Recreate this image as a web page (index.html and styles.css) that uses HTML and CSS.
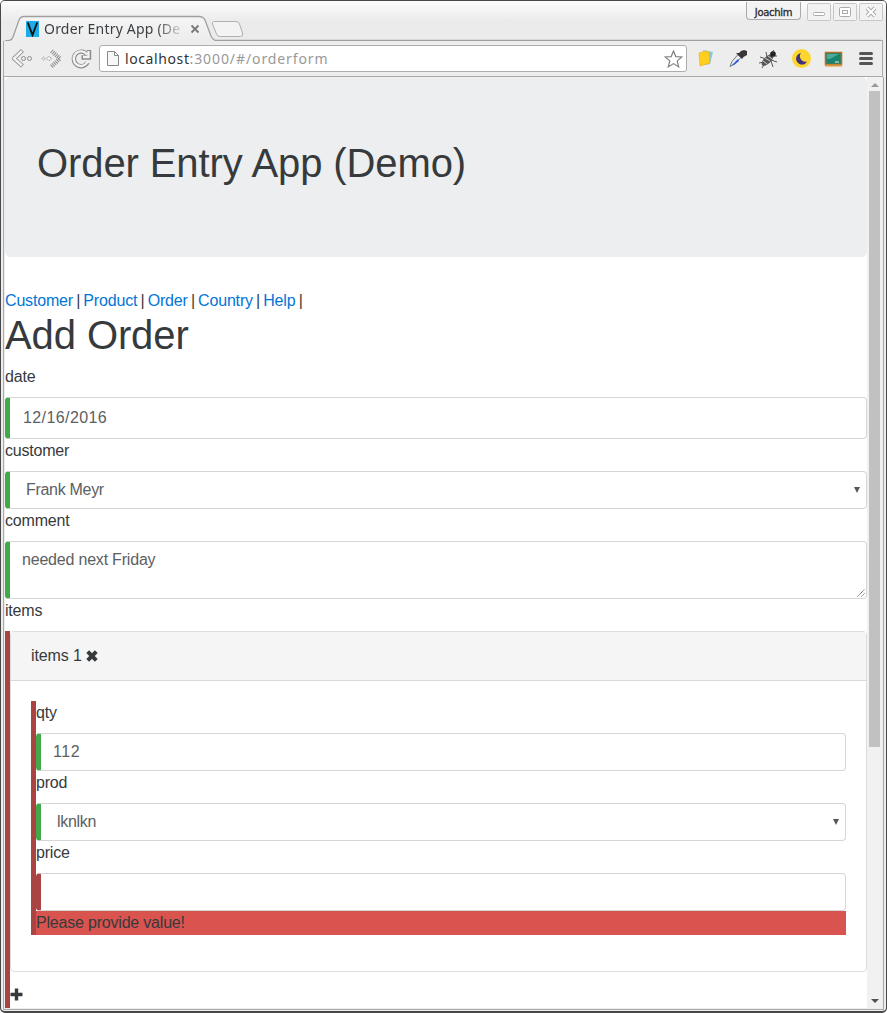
FILE: index.html
```html
<!DOCTYPE html>
<html lang="en">
<head>
<meta charset="utf-8">
<title>Order Entry App (Demo)</title>
<link rel="stylesheet" href="styles.css">
</head>
<body>
<div class="window">
  <header class="titlebar">
    <svg class="tab-shape" width="887" height="41" viewBox="0 0 887 41">
      <defs><linearGradient id="tab" x1="0" y1="0" x2="0" y2="1"><stop offset="0" stop-color="#f5f5f5"/><stop offset="1" stop-color="#ececec"/></linearGradient></defs>
      <path d="M3.5 43Q4 40.500 9 40.500Q12 40 13 37L19 20Q20.500 16.500 24 16.500H199Q203 16.500 205 20L211 36Q213 40.500 216 40.500H880Q883.500 40.500 883.500 43" fill="url(#tab)" stroke="#a0a0a0" stroke-width="1.300"/>
      <path d="M215 21.500H236Q238.500 21.500 239.500 24L242.500 33Q243.500 36.500 240.500 36.500H220Q217.500 36.500 216.500 34L212.500 24Q211.500 21.500 215 21.500Z" fill="#f3f3f3" stroke="#b0b0b0"/>
    </svg>
    <div class="tab">
      <svg width="13" height="16" viewBox="0 0 13 16"><path fill="#1badea" d="M0 0h13v16H0z"/><path d="M1.800 1.500L6.500 14L11.200 1.500" fill="none" stroke="#111" stroke-width="1.900"/></svg>
      <span class="tab-title">Order Entry App (De</span>
      <svg class="tab-close" width="10" height="10" viewBox="0 0 10 10"><path d="M1.500 1.500l7 7M8.500 1.500l-7 7" stroke="#777" stroke-width="1.800"/></svg>
    </div>
    <div class="controls">
      <span class="profile">Joachim</span>
      <svg width="76" height="19" viewBox="0 0 76 19"><g fill="#f2f2f2" stroke="#c6c6c6"><rect x=".5" y="1.500" width="23" height="17" rx="1"/><rect x="26.500" y="1.500" width="23" height="17" rx="1"/><rect x="52.500" y="1.500" width="23" height="17" rx="1"/></g><g fill="#fff" stroke="#aaa"><rect x="6.500" y="10.500" width="11" height="3" rx="1"/><rect x="32.500" y="5.500" width="11" height="9" rx="1"/><rect x="35.500" y="8.500" width="5" height="3"/></g><path d="M60 6l8 8M68 6l-8 8" stroke="#aaa" stroke-width="4"/><path d="M60 6l8 8M68 6l-8 8" stroke="#fff" stroke-width="2"/></svg>
    </div>
  </header>
  <div class="toolbar">
    <svg class="nav-icons" width="82" height="22" viewBox="0 0 82 22">
      <g fill="none" stroke="#8c8c8c" stroke-width="4.200" stroke-linejoin="round"><path d="M12.500 2.500L4 10.500l8.500 7.500"/><path d="M41.500 3l8.500 7.500-8.500 8" stroke-dasharray="1 1"/></g>
      <path d="M12 3L4 10.500l8 7" fill="none" stroke="#f2f2f2" stroke-width="2.400"/>
      <path d="M77 6.500A7.300 7.300 0 1 0 77.500 14.500M79 2v7.500h-7.500" fill="none" stroke="#8c8c8c" stroke-width="4.400"/>
      <path d="M77 6.500A7.300 7.300 0 1 0 77.500 14M78.500 3v6H73" fill="none" stroke="#f2f2f2" stroke-width="2.400"/>
      <g fill="#eee" stroke="#8c8c8c"><circle cx="13.500" cy="10.500" r="2"/><circle cx="19.500" cy="10.500" r="2"/><circle cx="33.500" cy="10.500" r="1.500" stroke-dasharray="1 1"/><circle cx="39" cy="10.500" r="2" stroke-dasharray="1 1"/></g>
    </svg>
    <div class="address">
      <svg width="12" height="15" viewBox="0 0 12 15"><path d="M.5.500h7l4 4v10H.5zM7.500.500v4h4" fill="#f7f7f7" stroke="#888"/></svg>
      <span class="url"><b>localhost</b>:3000/#/orderform</span>
      <svg class="star" width="19" height="18" viewBox="0 0 19 18"><path d="M9.500 1l2.300 5.600 6.100.400-4.700 3.900 1.500 6-5.200-3.300-5.200 3.300 1.500-6L1.100 7l6.100-.400z" fill="#fff" stroke="#808080" stroke-width="1.200"/></svg>
    </div>
    <svg class="ext" width="186" height="22" viewBox="0 0 186 22">
      <g transform="translate(4 -1)"><path d="M7 3l10 2-3 12-5 1z" fill="#8cc8d4"/><path d="M3 6l7-2 3 1 1 11-10 3z" fill="#ffcf20" stroke="#e8b20b" stroke-width=".6"/></g>
      <path d="M38 18.500l2-5 6-7 3 3-7 7z" fill="#e8edf4" stroke="#777"/><path d="M40 17l6-6 1 2-5 4z" fill="#3159d8"/><path d="M44 5l6 6 1.500-2 3.500-2V3l-3-1-3 1-2 2z" fill="#3b3636"/>
      <g transform="translate(5 0)"><g stroke="#555" stroke-width="1" fill="none"><path d="M63 9l6 2M62 15l5-1M65 20l3-5M69 4l1 5M76 19l-2-6M80 14l-6-2M77 2l-3 4M80 8l-5 0"/></g><ellipse cx="70.500" cy="12" rx="7.500" ry="3.500" transform="rotate(-45 70.500 12)" fill="#555"/><path d="M66 13l4 3M68 10l5 3M71 8l4 3" stroke="#ccc"/><circle cx="76" cy="6" r="2.800" fill="#222"/></g>
      <circle cx="109.500" cy="10.500" r="9.500" fill="#fdd52f"/><path d="M109 5a5.800 5.800 0 1 0 6 8.500A5.500 5.500 0 0 1 109 5z" fill="#40307e"/>
      <g transform="translate(8 -1)"><path d="M125.500 5.500h16v12h-16z" fill="#178371" stroke="#b46e28" stroke-width="1.600"/><path d="M125 18.500h17" stroke="#d99843" stroke-width="2"/><path d="M127 7h12l-9 5h-3z" fill="#4caa98"/><path d="M135 15h4" stroke="#eee"/></g>
      <path d="M168.500 5.500h11M168.500 10.500h11M168.500 15.500h11" stroke="#555" stroke-width="3" stroke-linecap="round"/>
    </svg>
  </div>
  <div class="viewport">
    <main class="page">
      <div class="jumbotron"><h1>Order Entry App (Demo)</h1></div>
      <nav><a>Customer</a> | <a>Product</a> | <a>Order</a> | <a>Country</a> | <a>Help</a> |</nav>
      <h1 class="heading">Add Order</h1>
      <label>date</label>
      <div class="field date">12/16/2016</div>
      <label>customer</label>
      <div class="field select"><span>Frank Meyr</span><i class="arrow"></i></div>
      <label>comment</label>
      <div class="field area">needed next Friday<svg class="grip" width="8" height="8" viewBox="0 0 8 8"><path d="M.5 7.500l7-7M4.500 7.500l3-3" stroke="#555" stroke-dasharray="1.200 .5"/></svg></div>
      <label>items</label>
      <section class="items">
        <div class="card">
          <div class="card-head">items 1 <svg width="12" height="12" viewBox="0 0 12 12"><path d="M1.700 1.700l8.600 8.600M10.300 1.700l-8.600 8.600" stroke="#373a3c" stroke-width="4"/></svg></div>
          <div class="card-body">
            <div class="group">
              <label>qty</label>
              <div class="field number">112</div>
              <label>prod</label>
              <div class="field select"><span>lknlkn</span><i class="arrow"></i></div>
              <label>price</label>
              <div class="field bad"></div>
              <div class="alert">Please provide value!</div>
            </div>
          </div>
        </div>
        <svg class="plus" width="13" height="13" viewBox="0 0 13 13"><path d="M6.500.500v12M.5 6.500h12" stroke="#373a3c" stroke-width="3.400"/></svg>
      </section>
    </main>
    <aside class="scrollbar"><i class="up"></i><div class="thumb"></div><i class="down"></i></aside>
  </div>
</div>
</body>
</html>
```
FILE: styles.css
```css
* { box-sizing: border-box; }
body { margin: 0; background: #fff; color: #373a3c; font: 16px/24px "Liberation Sans", Arial, sans-serif; letter-spacing: -.2px; }
.window { width: 887px; height: 1013px; overflow: hidden; display: flex; flex-direction: column; background: #ededed; border: 1px solid #484848; border-width: 1px 1px 2px; border-radius: 5px; position: relative; }
.titlebar { height: 40px; flex: none; display: flex; justify-content: space-between; background: linear-gradient(#fcfcfc, #ebebeb 20px); }
.tab-shape { position: absolute; left: -1px; top: -1px; }
.tab { position: relative; display: flex; align-items: center; height: 16px; margin: 20px 0 0 25px; }
.tab-title { width: 140px; margin-left: 5px; white-space: nowrap; font: 14px/20px "Noto Sans", sans-serif; letter-spacing: .2px; color: #3b3f42; -webkit-mask-image: linear-gradient(90deg, #000 112px, transparent 142px); }
.tab-close { margin-left: 6px; }
.controls { position: relative; display: flex; align-items: flex-start; gap: 6px; padding: 1px 3px 0 0; }
.profile { width: 55px; height: 18px; border: 1px solid #aaa; border-top: 0; border-radius: 0 0 4px 4px; background: #f3f3f3; text-align: center; font: 10px/21px "DejaVu Sans", sans-serif; letter-spacing: -.3px; color: #222; -webkit-text-stroke: .3px #333; }
.toolbar { height: 36px; flex: none; display: flex; align-items: center; padding-left: 9px; margin: 0 3px 0 2px; border: 1px solid #aaa; border-top: 0; padding-left: 6px; }
.nav-icons { flex: none; margin-right: 7px; }
.address { flex: none; width: 588px; height: 27px; display: flex; align-items: center; padding: 0 3px 0 7px; background: #fff; border: 1px solid #adadad; border-radius: 3px; }
.url { margin-left: 6px; font: 14px/20px "Noto Sans", sans-serif; letter-spacing: .9px; color: #999; }
.url b { font-weight: 400; color: #303436; letter-spacing: .6px; }
.star { margin-left: auto; }
.ext { flex: none; margin-left: 5px; }
.viewport { height: 933px; flex: none; margin: 0 2px; display: flex; background: #fff; overflow: hidden; border: solid #aaa; border-width: 0 1px 1px; padding: 0 1px 1px; background-clip: content-box; }
.page { width: 862px; height: 931px; overflow: hidden; }
h1 { margin: 0 0 8px; font-size: 40px; line-height: 44px; font-weight: 400; letter-spacing: -.1px; }
.jumbotron { height: 180px; padding: 64px 32px; margin-bottom: 32px; background: #eceeef; border-radius: 5px; }
nav { height: 24px; letter-spacing: -.17px; word-spacing: -1.1px; }
nav a { color: #0275d8; }
label { display: block; height: 24px; margin-bottom: 8px; }
.field { height: 38px; display: flex; align-items: center; padding: 0 12px; border: 1px solid #d6d6d6; border-left: 5px solid #42a948; border-radius: 4px; color: #5c6063; background: #fff; }
.date { height: 42px; padding-left: 13px; letter-spacing: .4px; }
.number { letter-spacing: .6px; }
.select { justify-content: space-between; padding: 0 6px 0 16px; letter-spacing: -.3px; }
.arrow { border: 3.5px solid transparent; border-top: 6px solid #55595c; border-bottom: 0; }
.area { height: 58px; align-items: flex-start; padding-top: 6px; position: relative; }
.grip { position: absolute; right: 1px; bottom: 1px; }
.items { border-left: 5px solid #a94442; height: 400px; }
.card { height: 341px; border: 1px solid #ddd; border-radius: 4px; }
.card-head { height: 49px; padding: 12px 20px; background: #f5f5f5; border-bottom: 1px solid #d9d9d9; letter-spacing: -.1px; }
.card-head svg { vertical-align: -1px; }
.card-body { padding: 20px; }
.group { border-left: 5px solid #a94442; }
.bad { border-left-color: #a94442; }
.alert { height: 24px; background: #d9534f; }
.plus { display: block; margin-top: 16px; }
.scrollbar { width: 15px; background: #f1f1f1; display: flex; flex-direction: column; align-items: center; }
.up { border: 4px solid transparent; border-bottom-color: #999; border-top: 0; margin: 6px 0 4px; }
.thumb { width: 11px; height: 656px; background: #c1c1c1; }
.down { border: 4px solid transparent; border-top-color: #505050; border-bottom: 0; margin: auto 0 5px; }
```
